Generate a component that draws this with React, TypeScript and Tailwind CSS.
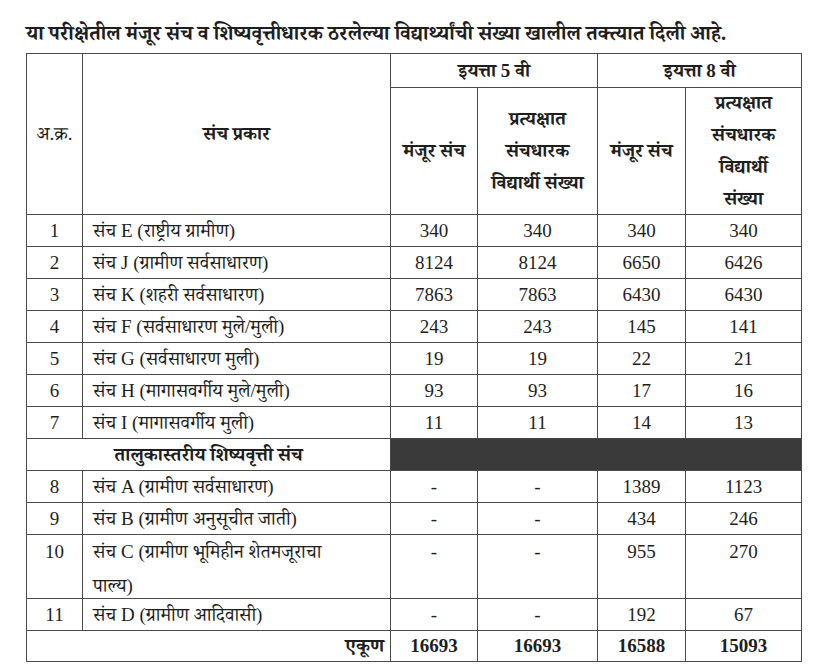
const serif = "font-['Liberation_Serif','Noto_Serif_Devanagari','Noto_Sans_Devanagari',serif]";

type Row = { no: string; name: React.ReactNode; a: string; b: string; c: string; d: string; tall?: boolean };

const mainRows: Row[] = [
  { no: "1", name: "संच E (राष्ट्रीय ग्रामीण)", a: "340", b: "340", c: "340", d: "340" },
  { no: "2", name: "संच J (ग्रामीण सर्वसाधारण)", a: "8124", b: "8124", c: "6650", d: "6426" },
  { no: "3", name: "संच K (शहरी सर्वसाधारण)", a: "7863", b: "7863", c: "6430", d: "6430" },
  { no: "4", name: "संच F (सर्वसाधारण मुले/मुली)", a: "243", b: "243", c: "145", d: "141" },
  { no: "5", name: "संच G (सर्वसाधारण मुली)", a: "19", b: "19", c: "22", d: "21" },
  { no: "6", name: "संच H (मागासवर्गीय मुले/मुली)", a: "93", b: "93", c: "17", d: "16" },
  { no: "7", name: "संच I (मागासवर्गीय मुली)", a: "11", b: "11", c: "14", d: "13" },
];

const talukaRows: Row[] = [
  { no: "8", name: "संच A (ग्रामीण सर्वसाधारण)", a: "-", b: "-", c: "1389", d: "1123" },
  { no: "9", name: "संच B (ग्रामीण अनुसूचीत जाती)", a: "-", b: "-", c: "434", d: "246" },
  {
    no: "10",
    name: (
      <>
        संच C (ग्रामीण भूमिहीन शेतमजूराचा
        <br />
        पाल्य)
      </>
    ),
    a: "-",
    b: "-",
    c: "955",
    d: "270",
    tall: true,
  },
  { no: "11", name: "संच D (ग्रामीण आदिवासी)", a: "-", b: "-", c: "192", d: "67" },
];

const cell = "border border-[#4a4a4a] p-0 align-top";

function Box({ h, className = "", children }: { h: string; className?: string; children?: React.ReactNode }) {
  return <div className={`${h} overflow-hidden ${className}`}>{children}</div>;
}

function DataRow({ row }: { row: Row }) {
  const h = row.tall ? "h-[63px] leading-[34px]" : "h-[31px] leading-[31px]";
  return (
    <tr>
      <td className={cell}>
        <Box h={h} className="text-center">{row.no}</Box>
      </td>
      <td className={cell}>
        <Box h={h} className="pl-[10px] text-left">{row.name}</Box>
      </td>
      <td className={cell}>
        <Box h={h} className="text-center">{row.a}</Box>
      </td>
      <td className={cell}>
        <Box h={h} className="text-center">{row.b}</Box>
      </td>
      <td className={cell}>
        <Box h={h} className="text-center">{row.c}</Box>
      </td>
      <td className={cell}>
        <Box h={h} className="text-center">{row.d}</Box>
      </td>
    </tr>
  );
}

export default function App() {
  return (
    <div className={`w-[830px] h-[669px] bg-white text-[#1e1e1e] ${serif} pl-[26px] pt-[20px]`}>
      <p className="text-[20.5px] font-bold leading-[26px] mb-[7px] whitespace-nowrap">
        या परीक्षेतील मंजूर संच व शिष्यवृत्तीधारक ठरलेल्या विद्यार्थ्यांची संख्या खालील तक्त्यात दिली आहे.
      </p>
      <table className="border-collapse table-fixed w-[775px] text-[19px]">
        <colgroup>
          <col className="w-[56px]" />
          <col className="w-[308px]" />
          <col className="w-[87px]" />
          <col className="w-[120px]" />
          <col className="w-[88px]" />
          <col className="w-[116px]" />
        </colgroup>
        <thead>
          <tr>
            <th rowSpan={2} className={`${cell} font-normal !align-middle`}>
              अ.क्र.
            </th>
            <th rowSpan={2} className={`${cell} font-bold !align-middle`}>
              संच प्रकार
            </th>
            <th colSpan={2} className={`${cell} font-bold`}>
              <Box h="h-[33px] leading-[33px]">इयत्ता 5 वी</Box>
            </th>
            <th colSpan={2} className={`${cell} font-bold`}>
              <Box h="h-[33px] leading-[33px]">इयत्ता 8 वी</Box>
            </th>
          </tr>
          <tr className="leading-[32px]">
            <th className={`${cell} font-bold`}>
              <Box h="h-[126px] flex items-center justify-center">मंजूर संच</Box>
            </th>
            <th className={`${cell} font-bold`}>
              <Box h="h-[126px] flex items-center justify-center">
                <span>
                  प्रत्यक्षात
                  <br />
                  संचधारक
                  <br />
                  विद्यार्थी संख्या
                </span>
              </Box>
            </th>
            <th className={`${cell} font-bold`}>
              <Box h="h-[126px] flex items-center justify-center">मंजूर संच</Box>
            </th>
            <th className={`${cell} font-bold`}>
              <Box h="h-[126px] flex items-center justify-center">
                <span>
                  प्रत्यक्षात
                  <br />
                  संचधारक
                  <br />
                  विद्यार्थी
                  <br />
                  संख्या
                </span>
              </Box>
            </th>
          </tr>
        </thead>
        <tbody>
          {mainRows.map((r) => (
            <DataRow key={r.no} row={r} />
          ))}
          <tr>
            <td colSpan={2} className={`${cell} text-center font-bold`}>
              <Box h="h-[31px] leading-[31px]">तालुकास्तरीय शिष्यवृत्ती संच</Box>
            </td>
            <td colSpan={4} className={`${cell} bg-[#3a3a3a]`} />
          </tr>
          {talukaRows.map((r) => (
            <DataRow key={r.no} row={r} />
          ))}
          <tr className="font-bold">
            <td colSpan={2} className={cell}>
              <Box h="h-[30px] leading-[30px]" className="text-right pr-[6px]">
                एकूण
              </Box>
            </td>
            <td className={`${cell} text-center`}>
              <Box h="h-[30px] leading-[30px]">16693</Box>
            </td>
            <td className={`${cell} text-center`}>
              <Box h="h-[30px] leading-[30px]">16693</Box>
            </td>
            <td className={`${cell} text-center`}>
              <Box h="h-[30px] leading-[30px]">16588</Box>
            </td>
            <td className={`${cell} text-center`}>
              <Box h="h-[30px] leading-[30px]">15093</Box>
            </td>
          </tr>
        </tbody>
      </table>
    </div>
  );
}
